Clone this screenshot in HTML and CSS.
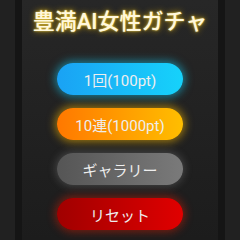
FILE: index.html
```html
<!DOCTYPE html>
<html lang="ja">
<head>
<meta charset="utf-8">
<link rel="stylesheet" href="styles.css">
</head>
<body>
<div class="panel">
  <h1 class="title">豊満AI女性ガチャ</h1>
  <div class="buttons">
    <button class="btn btn-blue">1回(100pt)</button>
    <button class="btn btn-orange">10連(1000pt)</button>
    <button class="btn btn-gray">ギャラリー</button>
    <button class="btn btn-red">リセット</button>
  </div>
</div>
</body>
</html>
```
FILE: styles.css
```css
html, body {
  margin: 0;
  padding: 0;
  width: 240px;
  height: 240px;
  overflow: hidden;
  background: #212121;
  font-family: Roboto, "Noto Sans CJK JP", sans-serif;
}
.panel {
  box-sizing: border-box;
  width: 210px;
  height: 240px;
  margin: 0 auto;
  border-left: 7px solid #151515;
  border-right: 7px solid #151515;
  background: linear-gradient(#272727, #1c1c1c);
  display: flex;
  flex-direction: column;
  align-items: center;
}
.title {
  margin: 7px 0 0;
  font-family: Roboto, "Noto Sans CJK JP", sans-serif;
  font-size: 22px;
  line-height: 30px;
  font-weight: 500;
  color: #fff8dc;
  text-shadow: 0 0 2px #ffe060, 0 0 6px #e0b000;
}
.buttons {
  margin-top: 26px;
  display: flex;
  flex-direction: column;
  gap: 13px;
}
.btn {
  width: 126px;
  height: 32px;
  border: none;
  border-radius: 16px;
  font-family: Roboto, "Noto Sans CJK JP", sans-serif;
  font-size: 15px;
  color: #eeeeee;
  padding: 0;
}
.btn-blue {
  background: linear-gradient(90deg, #1aa2f4, #16d2fb);
  box-shadow: 0 0 9px 2px rgba(20, 200, 240, 0.55);
}
.btn-orange {
  background: linear-gradient(90deg, #ff7800, #ffbe00);
  box-shadow: 0 0 9px 2px rgba(255, 190, 0, 0.55);
}
.btn-gray {
  background: linear-gradient(90deg, #555555, #7a7a7a);
  box-shadow: 0 0 8px 1px rgba(200, 200, 200, 0.25);
}
.btn-red {
  background: linear-gradient(90deg, #a00000, #e00000);
  box-shadow: 0 0 9px 2px rgba(230, 30, 0, 0.45);
}
```
